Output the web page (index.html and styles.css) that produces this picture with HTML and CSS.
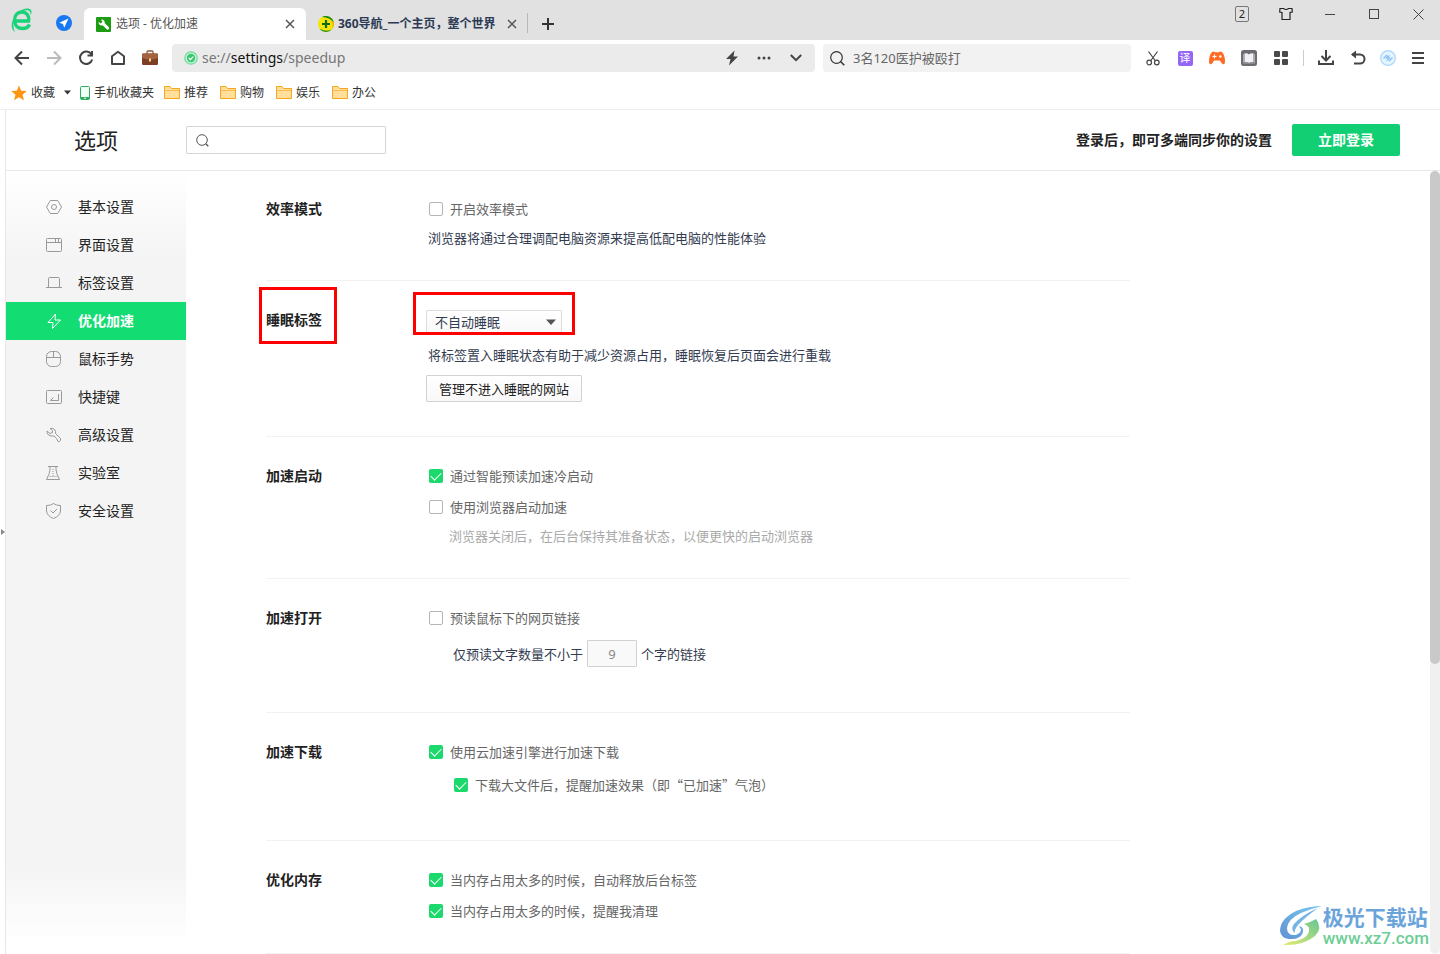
FILE: index.html
```html
<!DOCTYPE html>
<html lang="zh-CN">
<head>
<meta charset="utf-8">
<title>选项 - 优化加速</title>
<link rel="stylesheet" href="styles.css">
</head>
<body>
<header class="tabbar">
  <button class="logo" aria-label="浏览器菜单"><svg width="24" height="26" viewBox="0 0 24 26"><path d="M5.500 14H18.500C19.500 8 16 5 12 5C7.500 5 4.500 8.500 4.500 13.500C4.500 18.500 8 21.500 12.500 21.500C15.500 21.500 18.500 20 19.500 17.500" fill="none" stroke="#19d27a" stroke-width="3.500"/><path d="M8 5.500C13 1 19 .5 21 3C22 4.500 21.500 6.500 20.500 8C20.700 5.500 20 3.500 17.500 3.200C14.500 3 11 4 8 5.500ZM5 25C1.500 23 .500 17 3.500 12C3 17.500 3.500 22 5 25Z" fill="#19d27a"/></svg></button>
  <button class="nav-badge" aria-label="导航"><svg width="16" height="16" viewBox="0 0 16 16"><circle cx="8" cy="8" r="8" fill="#1877f2"/><path d="M12.500 3.500L3.200 7.800L7 9L8.200 12.800Z" fill="#fff"/></svg></button>
  <nav class="tabs" aria-label="标签页">
    <div class="tab tab-active">
      <svg width="15" height="15" viewBox="0 0 15 15"><rect width="15" height="15" rx="1" fill="#1c9c12"/><path d="M5 2.800A2.800 2.800 0 0 1 8.700 6L12.800 10.200A1.500 1.500 0 0 1 10.700 12.300L6.600 8.200A2.900 2.900 0 0 1 2.700 4.700L4.600 6.500L6.400 4.700Z" fill="#fff"/></svg>
      <span class="tab-title">选项 - 优化加速</span>
      <button class="tab-close" aria-label="关闭标签"><svg width="10" height="10" viewBox="0 0 10 10"><path d="M1 1L9 9M9 1L1 9"/></svg></button>
    </div>
    <div class="tab tab-idle">
      <svg width="16" height="16" viewBox="0 0 16 16"><circle cx="8" cy="8" r="8" fill="#f5e50a"/><path d="M4 1A8 8 0 0 1 15.800 6.500C13 3 9 1.200 4 1Z" fill="#1b8a1b"/><path d="M14 13.300A8 8 0 0 1 1.500 12.500C6 15.200 10.500 15 14 13.300Z" fill="#279427"/><path d="M15.800 6.500A8 8 0 0 1 14 13.300Q15.500 9 13 4Z" fill="#f4b000"/><path d="M8 4V12M4 8H12" stroke="#126b12" stroke-width="2.200"/></svg>
      <span class="tab-title">360导航_一个主页，整个世界</span>
      <button class="tab-close" aria-label="关闭标签"><svg width="10" height="10" viewBox="0 0 10 10"><path d="M1 1L9 9M9 1L1 9"/></svg></button>
    </div>
    <button class="tab-new" aria-label="新建标签"><svg width="12" height="12" viewBox="0 0 12 12"><path d="M6 0V12M0 6H12" stroke="#333" stroke-width="2"/></svg></button>
  </nav>
  <div class="window-tools">
    <button aria-label="已打开 2 个标签"><span class="count">2</span></button>
    <button aria-label="皮肤"><svg width="14" height="14" viewBox="0 0 14 14"><path d="M4.500 1.500H1L.700 5L3 5.500V12.500H11V5.500L13.300 5L13 1.500H9.500Q7 3.500 4.500 1.500Z" fill="none" stroke="#222" stroke-width="1.200"/></svg></button>
    <button aria-label="最小化"><svg width="10" height="10" viewBox="0 0 10 10"><path d="M0 5.500H10" stroke="#444"/></svg></button>
    <button aria-label="最大化"><svg width="10" height="10" viewBox="0 0 10 10"><rect x=".5" y=".5" width="9" height="9" fill="none" stroke="#444"/></svg></button>
    <button aria-label="关闭窗口"><svg width="11" height="11" viewBox="0 0 11 11"><path d="M.5 .5L10.500 10.500M10.500 .5L.5 10.500" stroke="#444"/></svg></button>
  </div>
</header>

<div class="toolbar">
  <div class="tool-group">
    <button aria-label="后退"><svg width="16" height="16" viewBox="0 0 16 16"><path d="M15 8H2M8 1.500L1.500 8L8 14.500" class="line"/></svg></button>
    <button aria-label="前进" disabled><svg width="16" height="16" viewBox="0 0 16 16"><path d="M1 8H14M8 1.500L14.500 8L8 14.500" class="line line-off"/></svg></button>
    <button aria-label="刷新"><svg width="16" height="16" viewBox="0 0 16 16"><path d="M13.500 4.500A6.200 6.200 0 1 0 14.200 9.500M14 1V5.500H9.500" class="line"/></svg></button>
    <button aria-label="主页"><svg width="16" height="16" viewBox="0 0 16 16"><path d="M2 6.200L8 1.800L14 6.200V14H2Z" class="line" stroke-linejoin="round"/></svg></button>
    <button aria-label="工具箱"><svg width="16" height="16" viewBox="0 0 16 16"><path d="M5 4V2Q5 1 6 1H10Q11 1 11 2V4" fill="none" stroke="#8a5a3c" stroke-width="1.300"/><rect y="3.500" width="16" height="11.500" rx="1.200" fill="#7c3f25"/><path d="M0 4.500Q0 3.500 1 3.500H15Q16 3.500 16 4.500V8Q8 11 0 8Z" fill="#a4623f"/><rect x="7" y="8.500" width="2" height="3" fill="#f4d58a"/></svg></button>
  </div>
  <div class="address">
    <svg width="14" height="14" viewBox="0 0 14 14"><circle cx="7" cy="7" r="6.200" fill="#c9f2d8" stroke="#6fdc98" stroke-width="1.200"/><circle cx="7" cy="7" r="4.200" fill="#3cc873"/><path d="M4.800 7L6.400 8.600L9.300 5.600" fill="none" stroke="#fff" stroke-width="1.300"/></svg>
    <span class="url">se://<b>settings</b>/speedup</span>
    <button aria-label="极速模式"><svg width="12" height="16" viewBox="0 0 12 16"><path d="M8.500 .5L0 9H4.500L3 15.500L12 6.500H7.500Z" fill="#444"/></svg></button>
    <button aria-label="更多"><svg width="14" height="4" viewBox="0 0 14 4"><g fill="#444"><circle cx="2" cy="2" r="1.500"/><circle cx="7" cy="2" r="1.500"/><circle cx="12" cy="2" r="1.500"/></g></svg></button>
    <button aria-label="展开"><svg width="12" height="8" viewBox="0 0 12 8"><path d="M.8 1L6 6.200L11.200 1" class="line"/></svg></button>
  </div>
  <label class="web-search">
    <svg width="15" height="15" viewBox="0 0 15 15"><circle cx="6.500" cy="6.500" r="5.800" fill="none" stroke="#333" stroke-width="1.200"/><path d="M10.500 10.500L14.300 14.300" stroke="#333" stroke-width="1.500"/></svg>
    <input type="text" placeholder="3名120医护被殴打" aria-label="网页搜索">
  </label>
  <div class="tool-group">
    <button aria-label="截图"><svg width="14" height="15" viewBox="0 0 14 15"><g fill="none" stroke="#444" stroke-width="1.200"><path d="M2.500 .5L9.500 10M11.500 .5L4.500 10"/><circle cx="3.200" cy="11.500" r="2.300"/><circle cx="10.800" cy="11.500" r="2.300"/></g></svg></button>
    <button aria-label="翻译"><span class="translate">译</span></button>
    <button aria-label="游戏"><svg width="16" height="14" viewBox="0 0 16 14"><path d="M3 1Q5 0 6 1.200H10Q11 0 13 1Q16 4 16 11Q15.800 14 13.500 13Q12 11.500 11 9.500H5Q4 11.500 2.500 13Q.2 14 0 11Q0 4 3 1Z" fill="#ff6b22"/><path d="M5.500 3.500V7.500M3.500 5.500H7.500" stroke="#fff" stroke-width="1.200"/><circle cx="11.300" cy="5.500" r="1.300" fill="#fff"/></svg></button>
    <button aria-label="阅读"><svg width="16" height="16" viewBox="0 0 16 16"><rect width="16" height="16" rx="2.500" fill="#6b6d73"/><path d="M3.500 3.500Q6 2.500 8 4.500Q10 2.500 12.500 3.500V12Q10 11.500 8 13Q6 11.500 3.500 12Z" fill="#f1f1f3"/><path d="M2.500 4V13H13.500V4" fill="none" stroke="#a9abb0"/></svg></button>
    <button aria-label="扩展"><svg width="14" height="14" viewBox="0 0 14 14"><g fill="#4a4a4a"><rect width="6" height="6" rx="1"/><rect x="8" width="6" height="6" rx="1"/><rect y="8" width="6" height="6" rx="1"/><rect x="8" y="8" width="6" height="6" rx="1"/></g></svg></button>
  </div>
  <span class="tool-divider"></span>
  <div class="tool-group">
    <button aria-label="下载"><svg width="16" height="16" viewBox="0 0 16 16"><path d="M8 0V10.500M3.500 6L8 10.500L12.500 6M1 10.500V14H15V10.500" class="line"/></svg></button>
    <button aria-label="恢复"><svg width="16" height="16" viewBox="0 0 16 16"><path d="M2 4.500H10A4.500 4.500 0 0 1 10 13.500H4" class="line"/><path d="M6 .5V8.500L1 4.500Z" fill="#444"/></svg></button>
    <button class="slim" aria-label="账号"><svg width="16" height="16" viewBox="0 0 16 16"><circle cx="8" cy="8" r="7.300" fill="#e3f4ff" stroke="#b3d9fb" stroke-width="1.400"/><path d="M3.500 8.500L6.500 5.500L9.500 8L6.500 10.500M12.500 7.500L9.500 10.500L6.500 8L9.500 5.500" fill="none" stroke="#8dc3f3" stroke-width="1.300"/></svg></button>
    <button aria-label="主菜单"><svg width="12" height="14" viewBox="0 0 12 14"><path d="M0 2H12M0 7H12M0 12H12" stroke="#444" stroke-width="2"/></svg></button>
  </div>
</div>

<nav class="bookmarks" aria-label="收藏栏">
  <div class="fav">
    <a href="#"><svg width="16" height="16" viewBox="0 0 16 16"><path d="M8 .5L10.200 5.700L15.800 6L11.500 9.800L13 15.300L8 12.200L3 15.300L4.500 9.800L.2 6L5.800 5.700Z" fill="#ff9410"/></svg>收藏</a>
    <button aria-label="展开收藏"><svg width="7" height="5" viewBox="0 0 7 5"><path d="M0 .5H7L3.500 4.500Z" fill="#333"/></svg></button>
    <a href="#"><svg width="10" height="14" viewBox="0 0 10 14"><rect x=".5" y=".5" width="9" height="13" rx="1" fill="#f2fff7" stroke="#2fae62"/><path d="M1 11H9V13.500H1Z" fill="#2fae62"/><path d="M4 12.200H6" stroke="#fff"/></svg>手机收藏夹</a>
  </div>
  <div class="folders">
    <a href="#"><svg width="16" height="13" viewBox="0 0 16 13"><path d="M.5 .5H6L7.500 2.500H15.500V12.500H.5Z" fill="#ffdf9c" stroke="#f9a41b"/><path d="M.5 4.500H15" stroke="#fbb94b"/></svg>推荐</a>
    <a href="#"><svg width="16" height="13" viewBox="0 0 16 13"><path d="M.5 .5H6L7.500 2.500H15.500V12.500H.5Z" fill="#ffdf9c" stroke="#f9a41b"/><path d="M.5 4.500H15" stroke="#fbb94b"/></svg>购物</a>
    <a href="#"><svg width="16" height="13" viewBox="0 0 16 13"><path d="M.5 .5H6L7.500 2.500H15.500V12.500H.5Z" fill="#ffdf9c" stroke="#f9a41b"/><path d="M.5 4.500H15" stroke="#fbb94b"/></svg>娱乐</a>
    <a href="#"><svg width="16" height="13" viewBox="0 0 16 13"><path d="M.5 .5H6L7.500 2.500H15.500V12.500H.5Z" fill="#ffdf9c" stroke="#f9a41b"/><path d="M.5 4.500H15" stroke="#fbb94b"/></svg>办公</a>
  </div>
</nav>

<div class="viewport">
  <button class="side-handle" aria-label="展开侧栏"><svg width="4" height="6" viewBox="0 0 4 6"><path d="M0 0L4 3L0 6Z" fill="#888"/></svg></button>
  <div class="page">
    <header class="page-head">
      <h1>选项</h1>
      <label class="option-search">
        <svg width="13" height="13" viewBox="0 0 13 13"><circle cx="6" cy="6" r="5.300" fill="none" stroke="#555"/><path d="M9.800 9.800L12.300 12.300" stroke="#555" stroke-width="1.300"/></svg>
        <input type="text" aria-label="搜索选项">
      </label>
      <p class="login-tip">登录后，即可多端同步你的设置</p>
      <button class="login">立即登录</button>
    </header>
    <div class="page-body">
      <nav class="side" aria-label="设置分类">
        <a href="#"><svg width="16" height="16" viewBox="0 0 16 16"><path d="M4.300 1.500H11.700L15.500 8L11.700 14.500H4.300L.5 8Z"/><circle cx="8" cy="8" r="2.500"/></svg>基本设置</a>
        <a href="#"><svg width="16" height="16" viewBox="0 0 16 16"><rect x=".5" y="1.500" width="15" height="13" rx="1"/><path d="M1 5.500H15M9.500 2V5M12.500 2V5"/></svg>界面设置</a>
        <a href="#"><svg width="16" height="16" viewBox="0 0 16 16"><path d="M2.500 12V3.500Q2.500 2.500 3.500 2.500H12.500Q13.500 2.500 13.500 3.500V12M0 12.500H16"/></svg>标签设置</a>
        <a href="#" class="current" aria-current="page"><svg width="16" height="16" viewBox="0 0 16 16"><path d="M9.500 1L2 9.500H7L6.500 15.500L14.500 7H9Z"/></svg>优化加速</a>
        <a href="#"><svg width="16" height="16" viewBox="0 0 16 16"><rect x=".5" y=".5" width="14" height="15" rx="5"/><path d="M.5 6.500H14.500M7.500 .5V6.500"/></svg>鼠标手势</a>
        <a href="#"><svg width="16" height="16" viewBox="0 0 16 16"><rect x=".5" y="1.500" width="15" height="13" rx="1"/><path d="M12.500 5V11.500H4.500L7.500 8.500"/></svg>快捷键</a>
        <a href="#"><svg width="16" height="16" viewBox="0 0 16 16"><path d="M4 1.500Q7 .5 9 3Q10 4.500 9.500 6.500L14.500 11.500Q15 13.500 13.500 14.500H12L10.500 11.500L8 9Q5 9.500 2.500 8Q.5 6 1 4L4 6.500L6.500 5.500V3.500Z"/></svg>高级设置</a>
        <a href="#"><svg width="16" height="16" viewBox="0 0 16 16"><path d="M2 1.500H12M4 1.500V4.500Q4 8 .5 14.500H13.500Q10 8 10 4.500V1.500"/><path d="M7 4V11M3.500 11.500H10.500" stroke-dasharray="1 1"/></svg>实验室</a>
        <a href="#"><svg width="16" height="16" viewBox="0 0 16 16"><path d="M7.500 .5Q10 2.500 14.500 2.500V8Q14 13 7.500 15.500Q1 13 .5 8V2.500Q5 2.500 7.500 .5Z"/><path d="M4.500 7.500L7 10L11 6"/></svg>安全设置</a>
      </nav>
      <main class="settings">
        <section>
          <h2>效率模式</h2>
          <div class="options">
            <label class="check"><input type="checkbox">开启效率模式</label>
            <p class="desc">浏览器将通过合理调配电脑资源来提高低配电脑的性能体验</p>
          </div>
        </section>
        <section class="with-action">
          <h2 class="marked">睡眠标签</h2>
          <div class="options">
            <div class="select-wrap marked">
              <select aria-label="睡眠标签"><option>不自动睡眠</option></select>
              <svg class="caret" width="10" height="6" viewBox="0 0 10 6"><path d="M0 .5H10L5 6Z" fill="#555"/></svg>
            </div>
            <p class="desc">将标签置入睡眠状态有助于减少资源占用，睡眠恢复后页面会进行重载</p>
            <button class="plain">管理不进入睡眠的网站</button>
          </div>
        </section>
        <section>
          <h2>加速启动</h2>
          <div class="options">
            <label class="check"><input type="checkbox" checked>通过智能预读加速冷启动</label>
            <label class="check"><input type="checkbox">使用浏览器启动加速</label>
            <p class="desc hint">浏览器关闭后，在后台保持其准备状态，以便更快的启动浏览器</p>
          </div>
        </section>
        <section class="roomy">
          <h2>加速打开</h2>
          <div class="options">
            <label class="check"><input type="checkbox">预读鼠标下的网页链接</label>
            <label class="count-row">仅预读文字数量不小于<input type="text" value="9" disabled>个字的链接</label>
          </div>
        </section>
        <section class="roomy">
          <h2>加速下载</h2>
          <div class="options">
            <label class="check"><input type="checkbox" checked>使用云加速引擎进行加速下载</label>
            <label class="check nested"><input type="checkbox" checked>下载大文件后，提醒加速效果（即“已加速”气泡）</label>
          </div>
        </section>
        <section>
          <h2>优化内存</h2>
          <div class="options">
            <label class="check"><input type="checkbox" checked>当内存占用太多的时候，自动释放后台标签</label>
            <label class="check"><input type="checkbox" checked>当内存占用太多的时候，提醒我清理</label>
          </div>
        </section>
      </main>
      <div class="scrollbar"><div class="thumb"></div></div>
    </div>
  </div>
</div>

<div class="watermark">
  <svg width="44" height="42" viewBox="0 0 44 42">
    <defs><linearGradient id="wb" x1="0" y1="1" x2="1" y2="0"><stop offset="0" stop-color="#4f86cf"/><stop offset="1" stop-color="#6cc6ee"/></linearGradient><linearGradient id="wg" x1="1" y1="0" x2="0" y2="1"><stop offset="0" stop-color="#55c08a"/><stop offset="1" stop-color="#e3ea62"/></linearGradient></defs>
    <path d="M43 1Q30 1 17 6Q1 14 1 26Q2 33 10 34Q22 35 24 27Q25 22 20 21Q25 27 17 30Q8 31 8 23Q9 14 22 8Q31 4 43 1Z" fill="url(#wb)"/>
    <path d="M16 28Q11 25 15 19Q23 10 39 3Q25 13 19 20Q15 25 16 28Z" fill="#64aee2"/>
    <path d="M37 14Q44 23 36 31Q24 41 4 40Q10 36 17 36Q29 33 30 26Q31 21 25 19Q32 17 37 14Z" fill="url(#wg)"/>
  </svg>
  <div><strong>极光下载站</strong><span>www.xz7.com</span></div>
</div>
</body>
</html>
```
FILE: styles.css
```css
*, *::before, *::after { box-sizing: border-box; }
body {
  margin: 0;
  height: 100vh;
  display: flex;
  flex-direction: column;
  overflow: hidden;
  position: relative;
  background: #fff;
  color: #222;
  font: 13px/20px "Noto Sans", "Noto Sans CJK SC", sans-serif;
}
h1, h2, p { margin: 0; }
button, input, select { font: inherit; color: inherit; }
button { margin: 0; padding: 0; border: 0; background: none; display: flex; align-items: center; justify-content: center; }
a { color: inherit; text-decoration: none; }
svg { display: block; flex: none; }
.line { fill: none; stroke: #444; stroke-width: 2; }
.line-off { stroke: #bbb; }

.tabbar { flex: none; height: 40px; display: flex; background: #e1e1e1; font-size: 12px; }
.logo { width: 44px; }
.nav-badge { width: 40px; padding-top: 6px; }
.tabs { flex: 1; display: flex; align-items: flex-end; }
.tab { height: 32px; display: flex; align-items: center; }
.tab-title { flex: 1; white-space: nowrap; }
.tab-active { width: 222px; padding: 0 11px 0 12px; gap: 5px; background: #fff; border-radius: 6px 6px 0 0; color: #555; }
.tab-idle { padding: 0 11px 0 12px; gap: 4px; color: #2c3a55; font-weight: bold; position: relative; }
.tab-idle .tab-close { margin-left: 7px; }
.tab-idle::after { content: ""; position: absolute; right: 0; top: 5px; width: 1px; height: 20px; background: #b8b8b8; }
.tab-close { width: 10px; height: 32px; }
.tab-close path { stroke: #555; stroke-width: 1.500; }
.tab-new { width: 40px; height: 32px; }
.window-tools { display: flex; }
.window-tools button { width: 44px; height: 28px; }
.count { width: 14px; height: 16px; border: 1px solid #777; border-radius: 2px; line-height: 14px; font-size: 11px; }

.toolbar { flex: none; height: 36px; display: flex; align-items: center; padding: 0 6px; }
.tool-group { display: flex; }
.tool-group button { width: 32px; height: 28px; }
.tool-group .slim { width: 28px; }
.tool-divider { width: 1px; height: 16px; margin: 0 6px; background: #ccc; }
.translate { width: 15px; height: 15px; border-radius: 2px; background: #9566f5; color: #fff; font-size: 11px; line-height: 14px; }
.address { flex: 1; height: 28px; margin: 0 8px 0 6px; padding: 0 3px 0 12px; display: flex; align-items: center; background: #ebebeb; border-radius: 4px; }
.address button { width: 32px; height: 28px; }
.url { flex: 1; margin-left: 4px; font-size: 14px; color: #777; }
.url b { font-weight: normal; color: #111; }
.web-search { width: 308px; height: 28px; margin-right: 6px; padding: 0 7px; display: flex; align-items: center; gap: 8px; background: #f2f2f2; border-radius: 4px; }
.web-search input { flex: 1; min-width: 0; padding: 0; border: 0; background: none; outline: 0; }
.web-search input::placeholder { color: #666; opacity: 1; }

.bookmarks { flex: none; height: 34px; padding: 0 11px; display: flex; gap: 10px; border-bottom: 1px solid #eee; font-size: 12px; color: #333; }
.fav, .folders { display: flex; align-items: center; }
.fav { gap: 9px; }
.folders { gap: 12px; }
.bookmarks a { display: flex; align-items: center; gap: 4px; }

.viewport { flex: 1; min-height: 0; display: flex; }
.side-handle { width: 5px; }
.page { flex: 1; min-width: 0; display: flex; flex-direction: column; border-left: 1px solid #e6e6e6; }
.page-head { flex: none; height: 61px; padding: 0 40px 0 68px; display: flex; align-items: center; border-bottom: 1px solid #e8e8e8; }
h1 { width: 112px; font-size: 22px; line-height: 32px; font-weight: normal; }
.option-search { width: 200px; height: 28px; padding: 0 9px; display: flex; align-items: center; border: 1px solid #d5d5d5; border-radius: 1px; }
.option-search input { flex: 1; min-width: 0; border: 0; outline: 0; background: none; }
.login-tip { margin-left: auto; font-size: 14px; font-weight: bold; }
.login { width: 108px; height: 32px; margin-left: 20px; background: #11cf72; border-radius: 2px; color: #fff; font-size: 14px; font-weight: bold; }

.page-body { flex: 1; min-height: 0; display: flex; }
.side { flex: none; width: 180px; padding-top: 17px; background: linear-gradient(#fff, #f4f4f4 90px, #f4f4f4 calc(100% - 90px), #fff calc(100% - 10px)); font-size: 14px; }
.side a { height: 38px; padding-left: 40px; display: flex; align-items: center; gap: 16px; }
.side svg { fill: none; stroke: #999; }
.side .current { background: #13dc73; color: #fff; font-weight: bold; }
.side .current svg { stroke: #fff; }

.settings { flex: 1; min-width: 0; overflow: hidden; padding: 0 300px 0 80px; }
section { display: flex; padding: 29px 0 32px; border-bottom: 1px solid #f2f2f2; }
section:first-child { padding-top: 28px; }
.with-action { padding-bottom: 34px; }
.roomy { padding-bottom: 45px; }
h2 { width: 160px; font-size: 14px; line-height: 20px; font-weight: bold; }
.options { flex: 1; display: flex; flex-direction: column; align-items: flex-start; }
.check { display: flex; align-items: center; gap: 7px; padding-left: 3px; color: #666; }
.check + .check { margin-top: 11px; }
.check.nested { margin-top: 13px; padding-left: 28px; font-family: "Noto Sans CJK SC", sans-serif; }
.check input { appearance: none; width: 14px; height: 14px; margin: 0; border: 1px solid #b5b5b5; border-radius: 2px; display: grid; place-items: center; }
.check input:checked { border: 0; background: #1bd96c; }
.check input:checked::after { content: ""; width: 10px; height: 6px; margin-bottom: 3px; border: solid #fff; border-width: 0 0 1px 1px; rotate: -45deg; }
.desc { padding-left: 2px; margin-top: 9px; color: #333c50; }
.hint { padding-left: 23px; color: #aaa; }
.select-wrap { position: relative; }
.select-wrap select { appearance: none; display: block; width: 136px; height: 24px; padding: 0 8px; border: 1px solid #ddd; border-radius: 1px; background: linear-gradient(#fff, #f8f8f8); color: #333c50; }
.caret { position: absolute; right: 6px; top: 9px; }
.select-wrap + .desc { margin-top: 11px; }
.plain { height: 27px; margin-top: 10px; padding: 0 12px; border: 1px solid #d2d2d2; border-radius: 1px; background: linear-gradient(#fff, #f8f8f8); }
.count-row { margin-top: 12px; padding-left: 27px; display: flex; align-items: center; gap: 4px; color: #333c50; }
.count-row input { width: 50px; height: 27px; padding: 0; border: 1px solid #d2d2d2; border-radius: 1px; background: #f9f9f9; color: #888; text-align: center; }

.marked { position: relative; }
.marked::after { content: ""; position: absolute; border: 3px solid #f00; pointer-events: none; }
h2.marked::after { left: -7px; top: -23px; width: 78px; height: 57px; }
.select-wrap.marked::after { left: -13px; top: -18px; width: 162px; height: 43px; }

.scrollbar { flex: none; width: 10px; background: #f0f0f0; border-radius: 5px; }
.thumb { height: 63%; border-radius: 5px; background: #c9c9c9; }

.watermark { position: absolute; right: 11px; bottom: 7px; display: flex; align-items: center; opacity: 0.9; }
.watermark div { display: flex; flex-direction: column; }
.watermark strong { font-size: 21px; line-height: 24px; color: #5b9bd8; white-space: nowrap; }
.watermark span { font: 500 17px/18px Roboto, "Liberation Sans", sans-serif; color: #5cc98a; }
```
